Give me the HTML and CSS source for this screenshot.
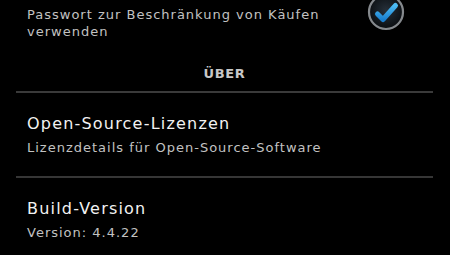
FILE: index.html
```html
<!DOCTYPE html>
<html lang="de">
<head>
    <meta charset="UTF-8">
    <meta name="viewport" content="width=device-width, initial-scale=1.0">
    <title>Einstellungen</title>
    <link rel="stylesheet" href="styles.css">
</head>
<body>

    <div class="prefs">
        <div class="pref pref-check">
            <p class="summary">Passwort zur Beschränkung von Käufen verwenden</p>
            <span class="checkbox">
                <svg viewBox="0 0 38 38" width="38" height="38">
                    <defs>
                        <radialGradient id="knob" cx="50%" cy="45%" r="55%">
                            <stop offset="0" stop-color="#26303a"/>
                            <stop offset="1" stop-color="#0a0d10"/>
                        </radialGradient>
                        <linearGradient id="tick" x1="0" y1="0" x2="0" y2="1">
                            <stop offset="0" stop-color="#4cbcf4"/>
                            <stop offset="1" stop-color="#1a7fcf"/>
                        </linearGradient>
                    </defs>
                    <circle cx="19" cy="19" r="17" fill="url(#knob)" stroke="#85898d" stroke-width="2.2"/>
                    <path d="M10.5 21 L16 26.5 L28.5 12.5" fill="none" stroke="url(#tick)" stroke-width="5" stroke-linecap="round" stroke-linejoin="round"/>
                </svg>
            </span>
        </div>

        <div class="category">ÜBER</div>

        <div class="pref">
            <h2 class="title">Open-Source-Lizenzen</h2>
            <p class="summary">Lizenzdetails für Open-Source-Software</p>
        </div>

        <div class="pref">
            <h2 class="title">Build-Version</h2>
            <p class="summary">Version: 4.4.22</p>
        </div>
    </div>

</body>
</html>
```

FILE: styles.css
```css
* {
    margin: 0;
    padding: 0;
    box-sizing: border-box;
}

body {
    font-family: 'DejaVu Sans', sans-serif;
    background-color: #000;
    color: #f0f0f0;
    overflow: hidden;
}

.prefs {
    padding: 0 17px 0 16px;
}

.pref {
    padding: 20px 11px;
    border-bottom: 2px solid #363636;
}

.pref:last-child {
    border-bottom: none;
}

.pref-check {
    display: flex;
    align-items: flex-start;
    justify-content: space-between;
    border-bottom: none;
    padding: 6px 28px 0 11px;
}

.pref-check .summary {
    width: 320px;
}

.checkbox {
    margin-top: -13px;
}

.checkbox svg {
    display: block;
}

.title {
    font-size: 16px;
    font-weight: normal;
    line-height: 22px;
    letter-spacing: 1.2px;
    color: #f2f2f2;
    margin-bottom: 4px;
}

.summary {
    font-size: 13px;
    line-height: 17px;
    letter-spacing: 1px;
    color: #c2c2c2;
}

.category {
    text-align: center;
    font-size: 13px;
    font-weight: bold;
    line-height: 15px;
    letter-spacing: 0.6px;
    color: #c8c8c8;
    padding: 26px 0 10px;
    border-bottom: 2px solid #3a3a3a;
}
```
